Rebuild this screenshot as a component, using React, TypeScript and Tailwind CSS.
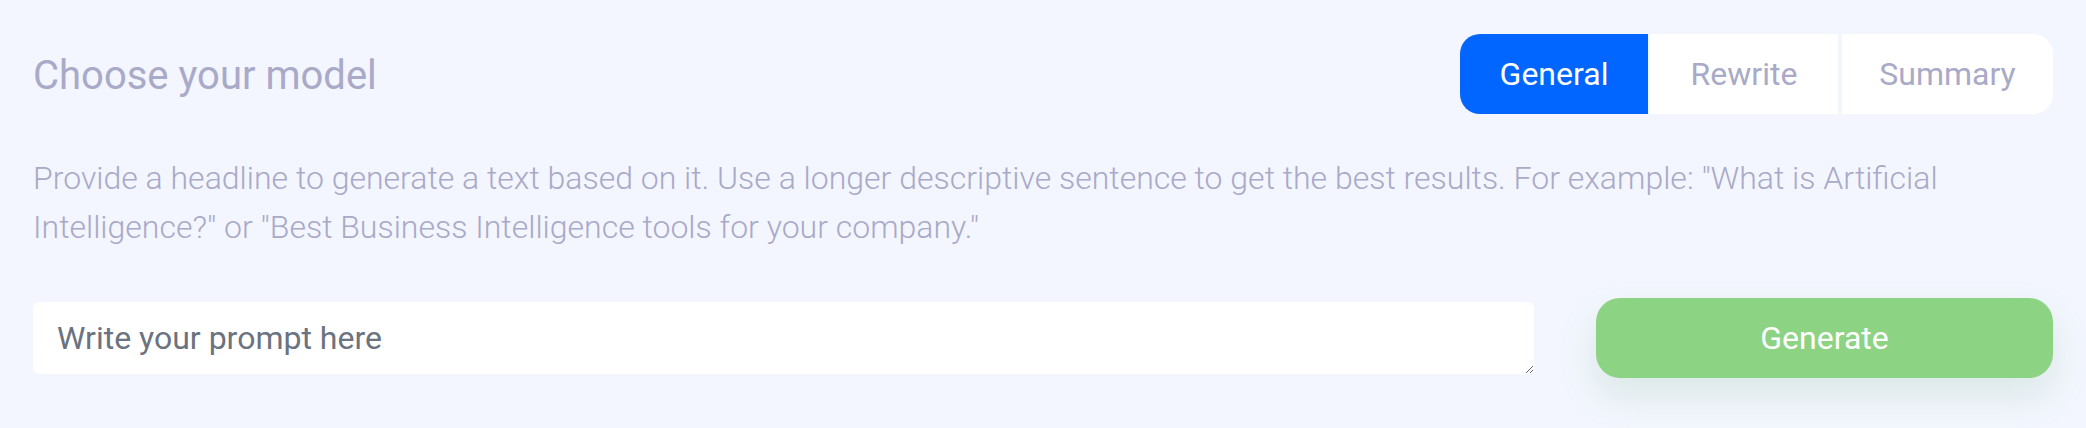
import { useState } from 'react';

const models = [
  { id: 'general', label: 'General', className: 'w-[188px] rounded-l-[20px]' },
  { id: 'rewrite', label: 'Rewrite', className: 'ml-[2px] w-[188px]' },
  { id: 'summary', label: 'Summary', className: 'ml-[4px] w-[211px] rounded-r-[20px]' },
];

export default function App() {
  const [model, setModel] = useState('general');
  const [prompt, setPrompt] = useState('');

  return (
    <main className="min-h-screen bg-[#F3F6FE] px-[33px] pt-[34px] font-['Roboto',sans-serif]">
      <header className="flex items-center justify-between">
        <h2 className="mt-1 text-[40px] leading-[48px] text-[#A9A9C8]">Choose your model</h2>
        <div className="flex">
          {models.map((m) => (
            <button
              key={m.id}
              type="button"
              onClick={() => setModel(m.id)}
              className={`h-20 text-center text-[32px] leading-[48px] ${m.className} ${
                model === m.id ? 'bg-[#0066FF] text-white' : 'bg-white text-[#A9A9C8]'
              }`}
            >
              {m.label}
            </button>
          ))}
        </div>
      </header>

      <p className="mt-10 text-[32px] font-light leading-[49px] text-[#A9A9C8]">
        Provide a headline to generate a text based on it. Use a longer descriptive sentence to get the best
        results. For example: "What is Artificial Intelligence?" or "Best Business Intelligence tools for your
        company."
      </p>

      <div className="mt-[46px] flex items-center gap-[62px]">
        <textarea
          rows={1}
          value={prompt}
          onChange={(event) => setPrompt(event.target.value)}
          placeholder="Write your prompt here"
          className="h-[72px] flex-1 rounded-md bg-white px-6 py-3 text-[32px] leading-[48px] text-[#6B7280] outline-none placeholder:text-[#6B7280]"
        />
        <button
          type="button"
          className="h-20 w-[457px] rounded-[24px] bg-[#8DD384] text-[32px] text-white shadow-[0_18px_36px_rgba(110,170,130,0.18)]"
        >
          Generate
        </button>
      </div>
    </main>
  );
}
